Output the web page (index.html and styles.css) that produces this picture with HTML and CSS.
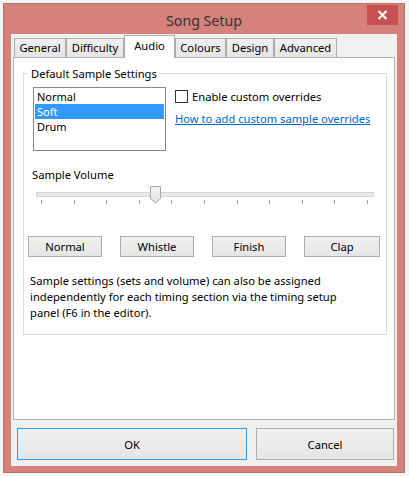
FILE: index.html
```html
<!DOCTYPE html>
<html>
<head>
<meta charset="utf-8">
<title>Song Setup</title>
<link rel="stylesheet" href="styles.css">
</head>
<body>
<div class="window">
  <div class="titlebar">
    <span class="title">Song Setup</span>
    <div class="close"><svg width="11" height="10" viewBox="0 0 11 10"><path d="M1.5 1 L9.5 9 M9.5 1 L1.5 9" stroke="#fff" stroke-width="2"/></svg></div>
  </div>
  <div class="client">
    <div class="tabs">
      <div class="tab w-general">General</div>
      <div class="tab w-difficulty">Difficulty</div>
      <div class="tab w-audio active">Audio</div>
      <div class="tab w-colours">Colours</div>
      <div class="tab w-design">Design</div>
      <div class="tab w-advanced">Advanced</div>
    </div>
    <div class="panel">
      <fieldset class="group">
        <legend>Default Sample Settings</legend>
        <div class="group-body">
          <div class="top-row">
            <div class="listbox">
              <div class="item">Normal</div>
              <div class="item sel">Soft</div>
              <div class="item">Drum</div>
            </div>
            <div class="options">
              <div class="check"><span class="box"></span><span class="check-label">Enable custom overrides</span></div>
              <a class="link">How to add custom sample overrides</a>
            </div>
          </div>
          <div class="vol-label">Sample Volume</div>
          <div class="slider">
            <div class="track"></div>
            <svg class="thumb" width="11" height="18" viewBox="0 0 11 18">
              <defs><linearGradient id="tg" x1="0" y1="0" x2="0" y2="1"><stop offset="0" stop-color="#f2f2f2"/><stop offset="1" stop-color="#e2e2e2"/></linearGradient></defs>
              <path d="M0.5 0.5 H10.5 V12.5 L5.5 17 L0.5 12.5 Z" fill="url(#tg)" stroke="#a8a8a8"/>
            </svg>
            <div class="ticks">
              <span></span><span></span><span></span><span></span><span></span><span></span><span></span><span></span><span></span><span></span><span></span>
            </div>
          </div>
          <div class="btn-row">
            <div class="btn small">Normal</div>
            <div class="btn small">Whistle</div>
            <div class="btn small">Finish</div>
            <div class="btn small wide">Clap</div>
          </div>
          <p class="note">Sample settings (sets and volume) can also be assigned independently for each timing section via the timing setup panel (F6 in the editor).</p>
        </div>
      </fieldset>
    </div>
    <div class="footer">
      <div class="btn big ok">OK</div>
      <div class="btn big cancel">Cancel</div>
    </div>
  </div>
</div>
</body>
</html>
```

FILE: styles.css
```css
* { box-sizing: border-box; }
html, body { margin: 0; padding: 0; }
body {
  width: 409px;
  height: 477px;
  overflow: hidden;
  background: #f5f5f5;
  font-family: "Noto Sans", "Open Sans", sans-serif;
  font-size: 11.2px;
  color: #000;
}
.window {
  margin: 3px 0 0 3px;
  width: 402px;
  height: 470px;
  background: #d4827b;
  border: 1px solid #b9716b;
  padding: 0 7px 6px 7px;
  display: flex;
  flex-direction: column;
}
.titlebar {
  position: relative;
  height: 30px;
  display: flex;
  justify-content: center;
  align-items: center;
  padding-top: 2px;
}
.title {
  font-size: 14.2px;
  color: #333;
}
.close {
  position: absolute;
  top: 1px;
  right: -1px;
  width: 31px;
  height: 20px;
  background: #c75050;
  display: flex;
  align-items: center;
  justify-content: center;
}
.client {
  height: 432px;
  background: #f0f0f0;
  padding: 1px 2px 6px 2px;
  display: flex;
  flex-direction: column;
}
.tabs {
  height: 22px;
  display: flex;
  align-items: flex-end;
  padding-left: 1px;
}
.tab {
  height: 19px;
  border: 1px solid #acacac;
  border-bottom: none;
  background: linear-gradient(#f0f0f0, #e5e5e5);
  text-align: center;
  line-height: 17px;
  color: #000;
}
.tab.active {
  position: relative;
  z-index: 1;
  height: 23px;
  margin-bottom: -1px;
  background: #fff;
  line-height: 19px;
}
.w-general { width: 52px; }
.w-difficulty { width: 58px; }
.w-audio { width: 51px; }
.w-colours { width: 51px; }
.w-design { width: 48px; }
.w-advanced { width: 63px; }
.panel {
  height: 363px;
  background: #fff;
  border: 1px solid #b4b4b4;
  padding: 8px 7px 0 9px;
}
.group {
  margin: 0;
  padding: 0;
  height: 269px;
  border: 1px solid #dcdcdc;
  min-width: 0;
}
.group legend {
  margin-left: 4px;
  padding: 0 2px 0 3px;
  line-height: 15px;
}
.group-body {
  padding-left: 9px;
}
.top-row {
  display: flex;
  align-items: flex-start;
  margin-top: 6px;
}
.listbox {
  width: 133px;
  height: 64px;
  border: 1px solid #828790;
  padding: 1px;
}
.item {
  height: 15px;
  line-height: 15px;
  font-size: 11px;
  padding-left: 2px;
}
.item.sel {
  background: #3399ff;
  color: #fff;
}
.options {
  margin-left: 9px;
  padding-top: 3px;
  display: flex;
  flex-direction: column;
  align-items: flex-start;
}
.check {
  display: flex;
  align-items: center;
  height: 13px;
}
.box {
  width: 13px;
  height: 13px;
  border: 1px solid #333;
  background: #fff;
}
.check-label {
  margin-left: 4px;
  line-height: 15px;
}
.link {
  margin-top: 8px;
  line-height: 15px;
  color: #0066cc;
  text-decoration: underline;
}
.vol-label {
  margin-top: 16px;
  margin-left: -1px;
  line-height: 16px;
}
.slider {
  position: relative;
  margin-top: 3px;
  margin-left: 3px;
  width: 338px;
  height: 24px;
}
.track {
  position: relative;
  top: 6px;
  height: 5px;
  background: #e7eaea;
  border: 1px solid #d6d6d6;
}
.thumb {
  position: absolute;
  left: 114px;
  top: 0;
}
.ticks {
  margin-top: 9px;
  height: 4px;
  padding: 0 6px 0 5px;
  display: flex;
  justify-content: space-between;
}
.ticks span {
  width: 1px;
  height: 4px;
  background: #a0a0a0;
}
.btn-row {
  margin-top: 26px;
  margin-left: -5px;
  display: flex;
  gap: 18px;
}
.btn {
  border: 1px solid #adadad;
  background: linear-gradient(#f0f0f0, #e5e5e5);
  display: flex;
  align-items: center;
  justify-content: center;
  color: #000;
}
.btn.small {
  width: 74px;
  height: 21px;
}
.btn.small.wide {
  width: 76px;
}
.note {
  margin: 16px 0 0 -3px;
  line-height: 16px;
  width: 320px;
}
.footer {
  margin-top: 8px;
  padding-left: 4px;
  display: flex;
  gap: 9px;
}
.btn.big {
  height: 32px;
}
.ok {
  width: 230px;
  border-color: #3399ff;
}
.cancel {
  width: 138px;
}
```
